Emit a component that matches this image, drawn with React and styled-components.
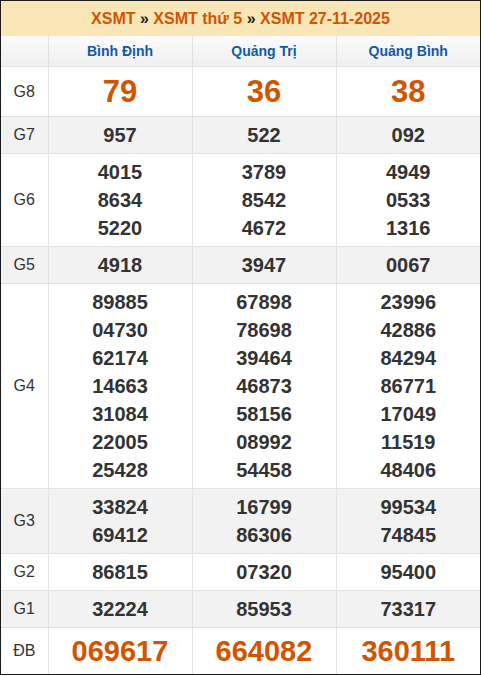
import React from 'react'
import styled, { createGlobalStyle } from 'styled-components'

const GlobalStyle = createGlobalStyle`
  html, body {
    margin: 0;
    padding: 0;
    background: #fff;
    font-family: "Liberation Sans", Arial, sans-serif;
  }
`;

const provinces = ['Bình Định', 'Quảng Trị', 'Quảng Bình'];

const rows = [
  { label: 'G8', big: 'g8', values: [['79'], ['36'], ['38']] },
  { label: 'G7', values: [['957'], ['522'], ['092']] },
  { label: 'G6', values: [['4015', '8634', '5220'], ['3789', '8542', '4672'], ['4949', '0533', '1316']] },
  { label: 'G5', values: [['4918'], ['3947'], ['0067']] },
  {
    label: 'G4',
    values: [
      ['89885', '04730', '62174', '14663', '31084', '22005', '25428'],
      ['67898', '78698', '39464', '46873', '58156', '08992', '54458'],
      ['23996', '42886', '84294', '86771', '17049', '11519', '48406'],
    ],
  },
  { label: 'G3', values: [['33824', '69412'], ['16799', '86306'], ['99534', '74845']] },
  { label: 'G2', values: [['86815'], ['07320'], ['95400']] },
  { label: 'G1', values: [['32224'], ['85953'], ['73317']] },
  { label: 'ĐB', big: 'db', values: [['069617'], ['664082'], ['360111']] },
];

const App = () => {
  return (
    <>
      <GlobalStyle />
      <Frame>
        <Title>
          XSMT <Sep>»</Sep> XSMT thứ 5 <Sep>»</Sep> XSMT 27-11-2025
        </Title>
        <Table>
          <colgroup>
            <col style={{ width: '47px' }} />
            <col />
            <col />
            <col />
          </colgroup>
          <thead>
            <tr>
              <HeadCell />
              {provinces.map((p) => (
                <HeadCell key={p}>{p}</HeadCell>
              ))}
            </tr>
          </thead>
          <tbody>
            {rows.map((row, i) => (
              <Row key={row.label} $shaded={i % 2 === 1}>
                <Label>{row.label}</Label>
                {row.values.map((col, j) => (
                  <Cell key={j}>
                    {col.map((n) => (
                      <Num key={n} $big={row.big}>{n}</Num>
                    ))}
                  </Cell>
                ))}
              </Row>
            ))}
          </tbody>
        </Table>
      </Frame>
    </>
  )
}

export default App

const Frame = styled.div`
  width: 479px;
  border: 1px solid #1a1a1a;
  background: #fff;
`;

const Title = styled.div`
  height: 35px;
  line-height: 35px;
  background: #f8e6b7;
  color: #d35400;
  font-size: 16px;
  font-weight: 700;
  text-align: center;
`;

const Sep = styled.span`
  color: #222;
`;

const Table = styled.table`
  width: 100%;
  border-collapse: collapse;
  table-layout: fixed;
  font-family: "Liberation Sans", Arial, sans-serif;
`;

const HeadCell = styled.th`
  height: 30px;
  padding: 0;
  border-left: 1px solid #e2e2e2;
  background: linear-gradient(#fbfbfb, #efefef);
  color: #1259a8;
  font-size: 14px;
  font-weight: 700;
  text-align: center;
  &:first-child {
    border-left: none;
  }
`;

const Row = styled.tr`
  background: ${(p) => (p.$shaded ? '#f2f2f2' : '#fff')};
  border-top: 1px solid #e2e2e2;
`;

const Label = styled.td`
  padding: 0;
  color: #333;
  font-size: 16px;
  text-align: center;
`;

const Cell = styled.td`
  padding: 4px 0;
  border-left: 1px solid #e2e2e2;
  text-align: center;
  vertical-align: middle;
`;

const Num = styled.div`
  font-weight: 700;
  font-size: ${(p) => (p.$big === 'g8' ? '31px' : p.$big === 'db' ? '29px' : '20px')};
  line-height: ${(p) => (p.$big === 'g8' ? '41px' : p.$big === 'db' ? '38px' : '28px')};
  color: ${(p) => (p.$big ? '#d35400' : '#333')};
`;
